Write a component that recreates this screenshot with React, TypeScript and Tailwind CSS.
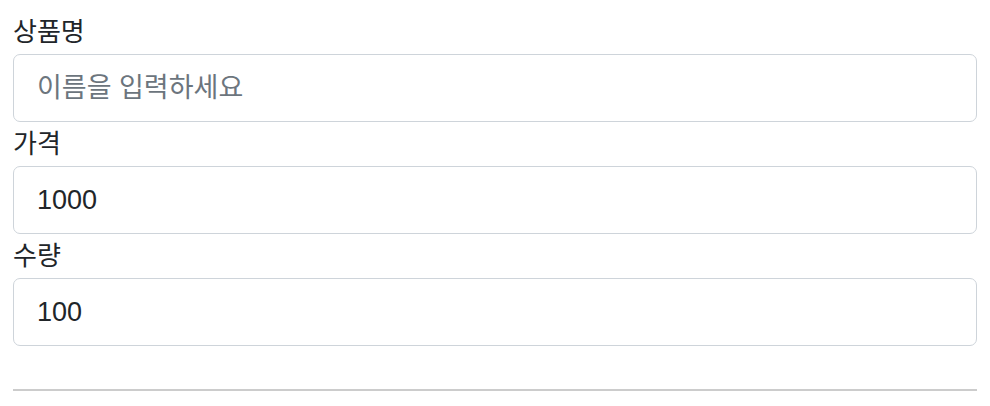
type Field = { id: string; label: string; value?: string; placeholder?: string };

const fields: Field[] = [
  { id: "name", label: "상품명", placeholder: "이름을 입력하세요" },
  { id: "price", label: "가격", value: "1000" },
  { id: "qty", label: "수량", value: "100" },
];

export default function App() {
  return (
    <div
      className="min-h-screen bg-white px-[13px] pt-[10px] text-[#212529]"
      style={{ fontFamily: '"Liberation Sans", "Noto Sans CJK KR", sans-serif' }}
    >
      <form>
        {fields.map((f) => (
          <div key={f.id}>
            <label htmlFor={f.id} className="block text-[26px] leading-[44px]">
              {f.label}
            </label>
            <input
              id={f.id}
              type="text"
              defaultValue={f.value}
              placeholder={f.placeholder}
              className="block h-[68px] w-full rounded-[7px] border border-[#ced4da] bg-white px-[23px] text-[27px] text-[#212529] outline-none placeholder:text-[#6c757d]"
            />
          </div>
        ))}
      </form>
      <hr className="mt-[43px] h-[2px] border-0 bg-[#cccccc]" />
    </div>
  );
}
